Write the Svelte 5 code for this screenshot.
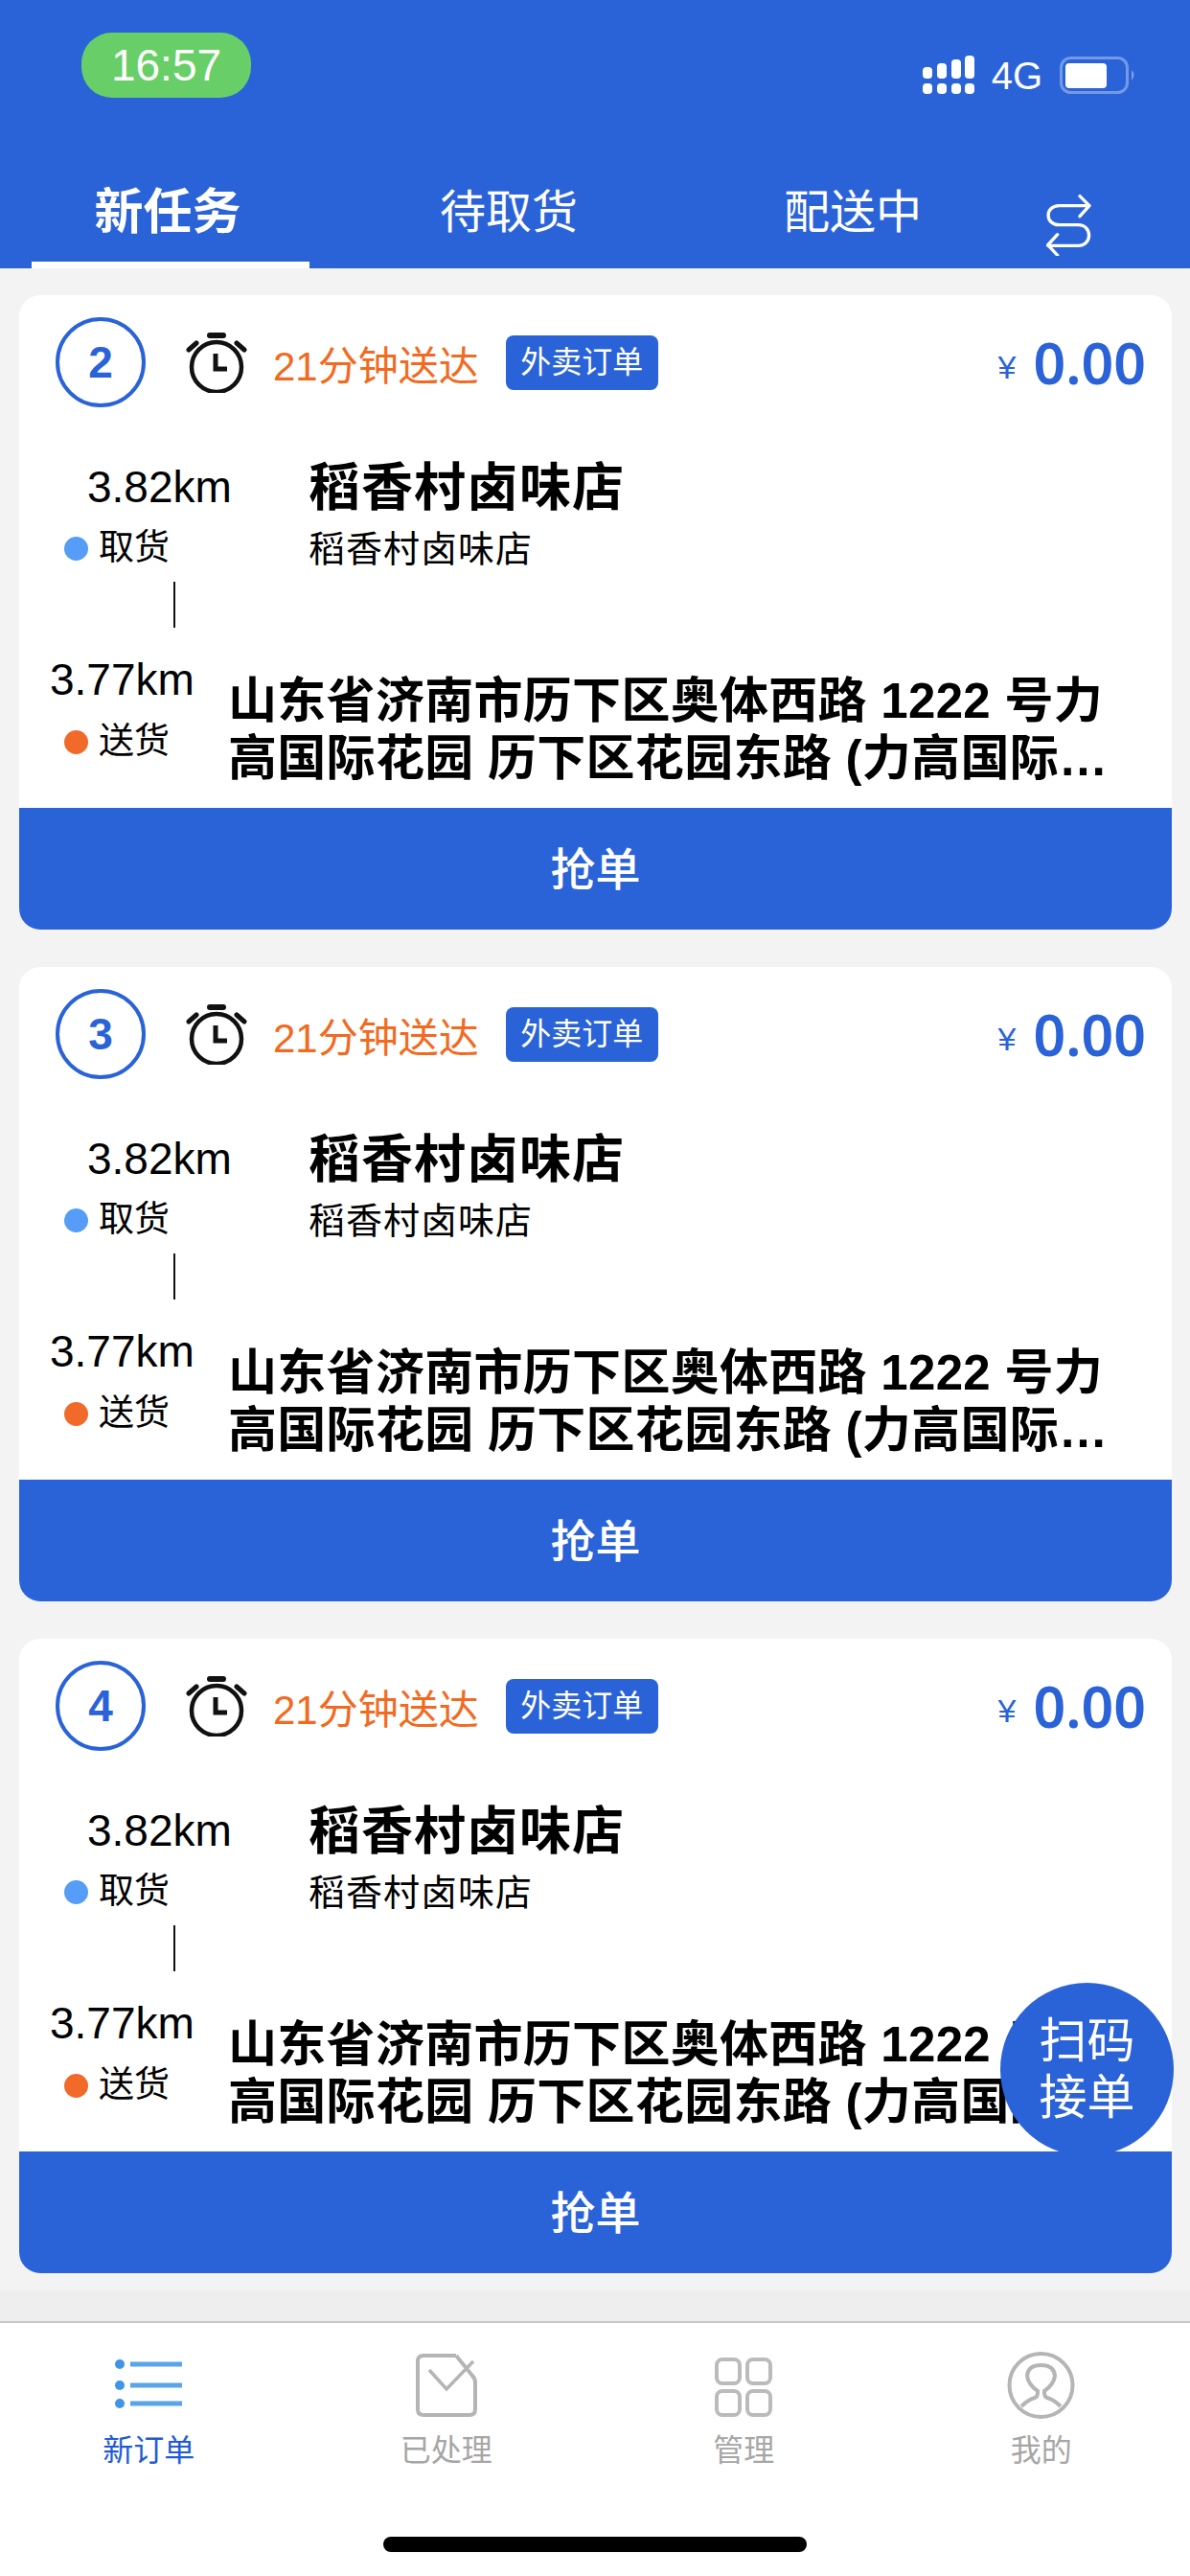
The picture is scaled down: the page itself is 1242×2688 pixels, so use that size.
<script>
  const orders = [2, 3, 4];
  const tabs = ['新任务', '待取货', '配送中'];
  const address = '山东省济南市历下区奥体西路 1222 号力高国际花园 历下区花园东路 (力高国际花园东门) 3号楼2单元';
</script>

<div class="page">
  <header class="header">
    <div class="status">
      <div class="time">16:57</div>
      <div class="status-right">
        <svg width="54" height="41" viewBox="0 0 54 41">
          <g fill="#fff">
            <rect x="0" y="12" width="10" height="12" rx="4" />
            <rect x="15" y="8" width="10" height="16" rx="4" />
            <rect x="30" y="4" width="10" height="20" rx="4" />
            <rect x="44" y="0" width="10" height="24" rx="4" />
            <rect x="0" y="29" width="10" height="11" rx="4" />
            <rect x="15" y="29" width="10" height="11" rx="4" />
            <rect x="30" y="29" width="10" height="11" rx="4" />
            <rect x="44" y="29" width="10" height="11" rx="4" />
          </g>
        </svg>
        <span class="net">4G</span>
        <svg width="80" height="40" viewBox="0 0 80 40">
          <rect x="1.5" y="1.5" width="69" height="36" rx="10" fill="none" stroke="#fff" stroke-opacity="0.35" stroke-width="3" />
          <rect x="6" y="7" width="43" height="26" rx="4" fill="#fff" />
          <path d="M75 14 q5 5 0 11 z" fill="#fff" fill-opacity="0.4" />
        </svg>
      </div>
    </div>
    <nav class="tabs">
      {#each tabs as tab, i}
        <div class="tab" class:active={i === 0}>
          <span>{tab}</span>
          {#if i === 0}<i class="bar"></i>{/if}
        </div>
      {/each}
      <svg class="swap" width="47" height="64" viewBox="0 0 141 192">
        <path d="M135 35H40C-5 35 -5 95 40 95H100C145 95 145 160 100 160H5M105 5L135 35L105 68M35 125L5 158L35 190" fill="none" stroke="#fff" stroke-width="10" stroke-linecap="round" stroke-linejoin="round" />
      </svg>
    </nav>
  </header>

  <main class="list">
    {#each orders as n}
      <section class="card">
        <div class="top">
          <div class="num">{n}</div>
          <svg class="clock" width="64" height="64" viewBox="0 0 64 64">
            <circle cx="32" cy="37" r="26" fill="none" stroke="#111" stroke-width="4.5" />
            <path d="M31 23V39H43" fill="none" stroke="#111" stroke-width="5" />
            <path d="M25 4H39" stroke="#111" stroke-width="6" stroke-linecap="round" />
            <path d="M3 19L11 12M61 19L53 12" stroke="#111" stroke-width="5" stroke-linecap="round" />
          </svg>
          <span class="eta">21分钟送达</span>
          <span class="tag">外卖订单</span>
          <div class="price"><small>¥</small><b>0.00</b></div>
        </div>

        <div class="pickup">
          <div class="side">
            <div class="dist">3.82km</div>
            <div class="kind"><i class="dot blue"></i>取货</div>
          </div>
          <div class="shop">
            <div class="shop-name">稻香村卤味店</div>
            <div class="shop-sub">稻香村卤味店</div>
          </div>
        </div>
        <div class="line"></div>
        <div class="dropoff">
          <div class="side">
            <div class="dist">3.77km</div>
            <div class="kind"><i class="dot orange"></i>送货</div>
          </div>
          <div class="address">{address}</div>
        </div>

        <button class="grab">抢单</button>
      </section>
    {/each}
  </main>

  <div class="gap"></div>

  <footer class="tabbar">
    <div class="item on">
      <svg width="72" height="70" viewBox="0 0 72 70">
        <g fill="#3f95e6">
          <circle cx="6" cy="13" r="5" />
          <circle cx="6" cy="35" r="5" />
          <circle cx="6" cy="54" r="5" />
        </g>
        <path d="M17 13H71M17 35H71M17 54H71" stroke="#5aa4ea" stroke-width="5" />
      </svg>
      <span>新订单</span>
    </div>
    <div class="item">
      <svg width="72" height="70" viewBox="0 0 72 70">
        <path d="M46 4H12Q6 4 6 10V60Q6 66 12 66H60Q66 66 66 60V32Q66 28 63 25L46 4" fill="none" stroke="#b5b5b5" stroke-width="4" />
        <path d="M18 19L36 39L64 10" fill="none" stroke="#b5b5b5" stroke-width="3.5" />
      </svg>
      <span>已处理</span>
    </div>
    <div class="item">
      <svg width="72" height="70" viewBox="0 0 72 70">
        <g fill="none" stroke="#bbb" stroke-width="4">
          <rect x="8" y="8" width="24" height="25" rx="6" />
          <rect x="40" y="8" width="24" height="25" rx="6" />
          <rect x="8" y="41" width="24" height="25" rx="6" />
          <rect x="40" y="41" width="24" height="25" rx="6" />
        </g>
      </svg>
      <span>管理</span>
    </div>
    <div class="item">
      <svg width="75" height="70" viewBox="0 0 75 70">
        <g fill="none" stroke="#b5b5b5" stroke-width="4">
          <circle cx="37.5" cy="35" r="33" />
          <path d="M17 57Q24 50 31 48Q34 47 34 43V41Q24 34 23 25Q24 14 37.5 14Q51 14 52 25Q51 34 41 41V43Q41 47 44 48Q51 50 58 57" />
        </g>
      </svg>
      <span>我的</span>
    </div>
    <div class="home"></div>
  </footer>

  <div class="scan">扫码<br />接单</div>
</div>

<style>
  :global(body) {
    margin: 0;
    background: #f3f3f3;
  }

  .page {
    position: relative;
    width: 1242px;
    height: 2688px;
    display: flex;
    flex-direction: column;
    font-family: "Liberation Sans", "Noto Sans CJK SC", sans-serif;
    color: #000;
    overflow: hidden;
  }

  .header {
    height: 280px;
    box-sizing: border-box;
    background: #2a63d8;
    color: #fff;
    display: flex;
    flex-direction: column;
    justify-content: space-between;
    flex-shrink: 0;
  }

  .status {
    display: flex;
    justify-content: space-between;
    align-items: flex-start;
    padding: 34px 56px 0 85px;
  }

  .time {
    width: 177px;
    height: 68px;
    line-height: 68px;
    text-align: center;
    background: #68cf68;
    border-radius: 32px;
    font-size: 46px;
  }

  .status-right {
    display: flex;
    align-items: center;
    gap: 18px;
    margin-top: 24px;
  }

  .net {
    font-size: 40px;
    line-height: 40px;
  }

  .tabs {
    display: flex;
    height: 100px;
  }

  .tab {
    width: 356px;
    display: flex;
    flex-direction: column;
    align-items: center;
    font-size: 48px;
    line-height: 84px;
  }

  .tab span {
    padding-right: 6px;
  }

  .tab:nth-child(3) span {
    padding-right: 0;
  }

  .tab.active {
    font-size: 51px;
    font-weight: 700;
  }

  .bar {
    display: block;
    width: 290px;
    height: 7px;
    margin-top: auto;
    background: #fff;
  }

  .swap {
    margin: 23px 0 0 24px;
  }

  .list {
    padding: 28px 19px 18px 20px;
    display: flex;
    flex-direction: column;
    gap: 39px;
  }

  .card {
    background: #fff;
    border-radius: 22px;
    overflow: hidden;
  }

  .top {
    height: 140px;
    display: flex;
    align-items: center;
    padding: 0 27px 0 38px;
  }

  .num {
    width: 94px;
    height: 94px;
    box-sizing: border-box;
    border: 4px solid #2a63d8;
    border-radius: 50%;
    display: flex;
    align-items: center;
    justify-content: center;
    color: #2a63d8;
    font-size: 46px;
    font-weight: 700;
  }

  .clock {
    margin-left: 42px;
  }

  .eta {
    margin-left: 27px;
    color: #f26a21;
    font-size: 42px;
  }

  .tag {
    margin-left: 28px;
    width: 159px;
    height: 57px;
    line-height: 56px;
    text-align: center;
    background: #2a63d8;
    color: #fff;
    border-radius: 8px;
    font-size: 32px;
  }

  .price {
    margin-left: auto;
    display: flex;
    align-items: center;
    color: #2a63d8;
  }

  .price small {
    font-size: 34px;
    margin: 10px 18px 0 0;
  }

  .price b {
    font-family: "Noto Sans", sans-serif;
    font-size: 59px;
    font-weight: 600;
  }

  .pickup {
    display: flex;
    padding-top: 28px;
  }

  .pickup .side {
    width: 302px;
  }

  .pickup .dist {
    padding-left: 71px;
  }

  .side {
    flex-shrink: 0;
  }

  .dist {
    font-size: 46px;
    line-height: 64px;
  }

  .kind {
    display: flex;
    align-items: center;
    padding-left: 47px;
    font-size: 37px;
    line-height: 64px;
  }

  .dot {
    width: 25px;
    height: 25px;
    border-radius: 50%;
    margin-right: 11px;
  }

  .blue {
    background: #559df7;
  }

  .orange {
    background: #f26a2a;
  }

  .shop-name {
    font-size: 54px;
    line-height: 66px;
    letter-spacing: 1px;
    font-weight: 700;
  }

  .shop-sub {
    font-size: 38px;
    line-height: 62px;
    letter-spacing: 1px;
  }

  .line {
    width: 2px;
    height: 48px;
    margin: 3px 0 0 161px;
    background: #111;
  }

  .dropoff {
    display: flex;
    margin-top: 21px;
    padding: 0 40px 21px 0;
  }

  .dropoff .side {
    width: 218px;
  }

  .dropoff .dist {
    padding-left: 32px;
    line-height: 66px;
  }

  .address {
    padding-top: 26px;
    font-size: 51px;
    line-height: 60px;
    letter-spacing: 0.3px;
    font-weight: 700;
    display: -webkit-box;
    -webkit-box-orient: vertical;
    -webkit-line-clamp: 2;
    overflow: hidden;
  }

  .grab {
    display: block;
    width: 100%;
    height: 127px;
    border: 0;
    padding: 0 0 6px;
    background: #2a63d8;
    color: #fff;
    font: inherit;
    font-size: 47px;
    font-weight: 500;
  }

  .gap {
    flex: 1;
    background: #eee;
  }

  .tabbar {
    position: relative;
    height: 266px;
    box-sizing: border-box;
    border-top: 2px solid #c8c8c8;
    background: #fff;
    display: flex;
    flex-shrink: 0;
    padding-top: 30px;
  }

  .item {
    flex: 1;
    display: flex;
    flex-direction: column;
    align-items: center;
    color: #a6a6a6;
    font-size: 32px;
    line-height: 50px;
  }

  .item span {
    margin-top: 8px;
  }

  .item.on {
    color: #1f5bd8;
  }

  .home {
    position: absolute;
    left: 400px;
    bottom: 25px;
    width: 442px;
    height: 16px;
    border-radius: 8px;
    background: #000;
  }

  .scan {
    position: absolute;
    left: 1044px;
    top: 2069px;
    width: 181px;
    height: 181px;
    border-radius: 50%;
    background: #2a63d8;
    color: #fff;
    box-sizing: border-box;
    padding-top: 32px;
    text-align: center;
    font-size: 50px;
    line-height: 59px;
  }
</style>
